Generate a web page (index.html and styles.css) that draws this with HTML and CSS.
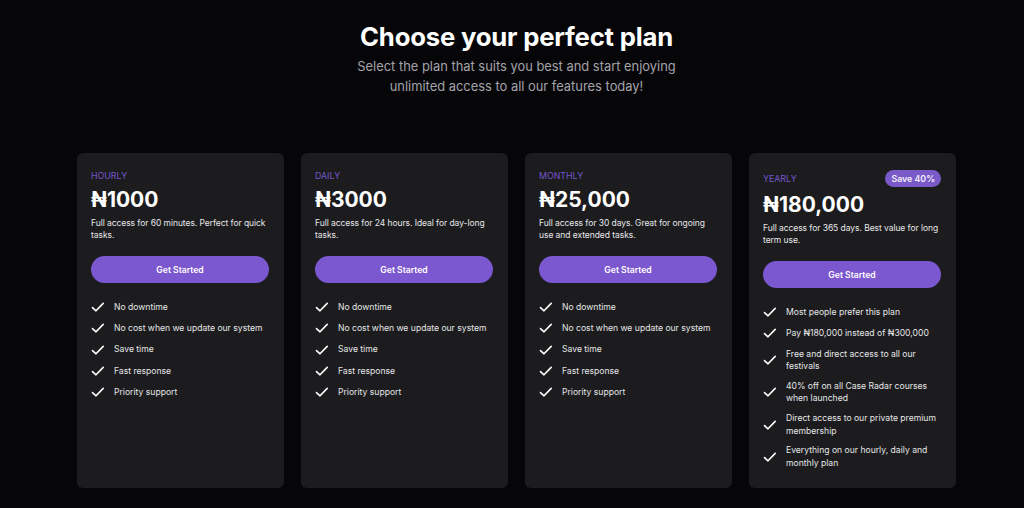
FILE: index.html
```html
<!DOCTYPE html>
<html lang="en">
<head>
<meta charset="utf-8">
<title>Pricing</title>
<link rel="stylesheet" href="styles.css">
</head>
<body>
<main class="page">
  <header class="intro">
    <h1 class="title">Choose your perfect plan</h1>
    <p class="subtitle">Select the plan that suits you best and start enjoying<br>unlimited access to all our features today!</p>
  </header>
  <section class="plans">
    <article class="card">
      <div class="card-head"><span class="label">HOURLY</span></div>
      <div class="price">₦1000</div>
      <p class="desc">Full access for 60 minutes. Perfect for quick tasks.</p>
      <button class="cta">Get Started</button>
      <ul class="features">
        <li><svg class="check" viewBox="0 0 14 14"><path d="M1.5 7.6 L5 10.8 L12.2 3.4"/></svg><span>No downtime</span></li>
        <li><svg class="check" viewBox="0 0 14 14"><path d="M1.5 7.6 L5 10.8 L12.2 3.4"/></svg><span>No cost when we update our system</span></li>
        <li><svg class="check" viewBox="0 0 14 14"><path d="M1.5 7.6 L5 10.8 L12.2 3.4"/></svg><span>Save time</span></li>
        <li><svg class="check" viewBox="0 0 14 14"><path d="M1.5 7.6 L5 10.8 L12.2 3.4"/></svg><span>Fast response</span></li>
        <li><svg class="check" viewBox="0 0 14 14"><path d="M1.5 7.6 L5 10.8 L12.2 3.4"/></svg><span>Priority support</span></li>
      </ul>
    </article>
    <article class="card">
      <div class="card-head"><span class="label">DAILY</span></div>
      <div class="price">₦3000</div>
      <p class="desc">Full access for 24 hours. Ideal for day-long tasks.</p>
      <button class="cta">Get Started</button>
      <ul class="features">
        <li><svg class="check" viewBox="0 0 14 14"><path d="M1.5 7.6 L5 10.8 L12.2 3.4"/></svg><span>No downtime</span></li>
        <li><svg class="check" viewBox="0 0 14 14"><path d="M1.5 7.6 L5 10.8 L12.2 3.4"/></svg><span>No cost when we update our system</span></li>
        <li><svg class="check" viewBox="0 0 14 14"><path d="M1.5 7.6 L5 10.8 L12.2 3.4"/></svg><span>Save time</span></li>
        <li><svg class="check" viewBox="0 0 14 14"><path d="M1.5 7.6 L5 10.8 L12.2 3.4"/></svg><span>Fast response</span></li>
        <li><svg class="check" viewBox="0 0 14 14"><path d="M1.5 7.6 L5 10.8 L12.2 3.4"/></svg><span>Priority support</span></li>
      </ul>
    </article>
    <article class="card">
      <div class="card-head"><span class="label">MONTHLY</span></div>
      <div class="price">₦25,000</div>
      <p class="desc">Full access for 30 days. Great for ongoing use and extended tasks.</p>
      <button class="cta">Get Started</button>
      <ul class="features">
        <li><svg class="check" viewBox="0 0 14 14"><path d="M1.5 7.6 L5 10.8 L12.2 3.4"/></svg><span>No downtime</span></li>
        <li><svg class="check" viewBox="0 0 14 14"><path d="M1.5 7.6 L5 10.8 L12.2 3.4"/></svg><span>No cost when we update our system</span></li>
        <li><svg class="check" viewBox="0 0 14 14"><path d="M1.5 7.6 L5 10.8 L12.2 3.4"/></svg><span>Save time</span></li>
        <li><svg class="check" viewBox="0 0 14 14"><path d="M1.5 7.6 L5 10.8 L12.2 3.4"/></svg><span>Fast response</span></li>
        <li><svg class="check" viewBox="0 0 14 14"><path d="M1.5 7.6 L5 10.8 L12.2 3.4"/></svg><span>Priority support</span></li>
      </ul>
    </article>
    <article class="card">
      <div class="card-head"><span class="label">YEARLY</span><span class="badge">Save 40%</span></div>
      <div class="price">₦180,000</div>
      <p class="desc">Full access for 365 days. Best value for long term use.</p>
      <button class="cta">Get Started</button>
      <ul class="features">
        <li><svg class="check" viewBox="0 0 14 14"><path d="M1.5 7.6 L5 10.8 L12.2 3.4"/></svg><span>Most people prefer this plan</span></li>
        <li><svg class="check" viewBox="0 0 14 14"><path d="M1.5 7.6 L5 10.8 L12.2 3.4"/></svg><span>Pay ₦180,000 instead of ₦300,000</span></li>
        <li><svg class="check" viewBox="0 0 14 14"><path d="M1.5 7.6 L5 10.8 L12.2 3.4"/></svg><span>Free and direct access to all our festivals</span></li>
        <li><svg class="check" viewBox="0 0 14 14"><path d="M1.5 7.6 L5 10.8 L12.2 3.4"/></svg><span>40% off on all Case Radar courses when launched</span></li>
        <li><svg class="check" viewBox="0 0 14 14"><path d="M1.5 7.6 L5 10.8 L12.2 3.4"/></svg><span>Direct access to our private premium membership</span></li>
        <li><svg class="check" viewBox="0 0 14 14"><path d="M1.5 7.6 L5 10.8 L12.2 3.4"/></svg><span>Everything on our hourly, daily and monthly plan</span></li>
      </ul>
    </article>
  </section>
</main>
</body>
</html>
```

FILE: styles.css
```css
* { box-sizing: border-box; }
html, body {
  margin: 0;
  padding: 0;
  background: #060608;
  color: #ffffff;
  font-family: Inter, "Noto Sans", "DejaVu Sans", sans-serif;
}
.page {
  padding: 21px 0 0 9px;
  display: flex;
  flex-direction: column;
  align-items: center;
}
.intro {
  text-align: center;
}
.title {
  margin: 0;
  font-size: 25.7px;
  line-height: 32px;
  font-weight: 700;
  letter-spacing: -0.2px;
}
.subtitle {
  margin: 4px 0 0;
  font-size: 12.9px;
  line-height: 20px;
  color: #a3a3aa;
}
.plans {
  margin-top: 56px;
  display: grid;
  grid-template-columns: repeat(4, 207px);
  gap: 17px;
}
.card {
  background: #1c1c1e;
  border-radius: 6px;
  padding: 17px 15px 19px 14px;
  display: flex;
  flex-direction: column;
}
.card-head {
  display: flex;
  align-items: center;
  justify-content: space-between;
  min-height: 12px;
}
.label {
  font-size: 8.8px;
  line-height: 12px;
  color: #7456cc;
}
.badge {
  background: #7a5ac8;
  color: #f2eefc;
  font-size: 8.8px;
  font-weight: 600;
  line-height: 17px;
  padding: 0 6px;
  border-radius: 9px;
}
.price {
  margin-top: 5px;
  font-size: 21px;
  line-height: 26px;
  font-weight: 700;
}
.desc {
  margin: 5px 0 0;
  font-size: 8.5px;
  letter-spacing: -0.06px;
  line-height: 11.5px;
  color: #e6e6e8;
}
.cta {
  margin-top: 15px;
  height: 27px;
  border: 0;
  border-radius: 14px;
  background: #7b58cf;
  color: #ffffff;
  font-family: inherit;
  font-size: 8.6px;
  font-weight: 600;
  cursor: pointer;
}
.features {
  list-style: none;
  margin: 17px 0 0;
  padding: 0;
  display: flex;
  flex-direction: column;
  gap: 7.25px;
}
.features li {
  display: flex;
  align-items: center;
  gap: 9px;
  min-height: 14px;
  font-size: 8.6px;
  line-height: 12.5px;
  color: #e6e6e8;
}
.check {
  flex: none;
  width: 14px;
  height: 14px;
  fill: none;
  stroke: #ffffff;
  stroke-width: 1.6;
  stroke-linecap: round;
  stroke-linejoin: round;
}
```
